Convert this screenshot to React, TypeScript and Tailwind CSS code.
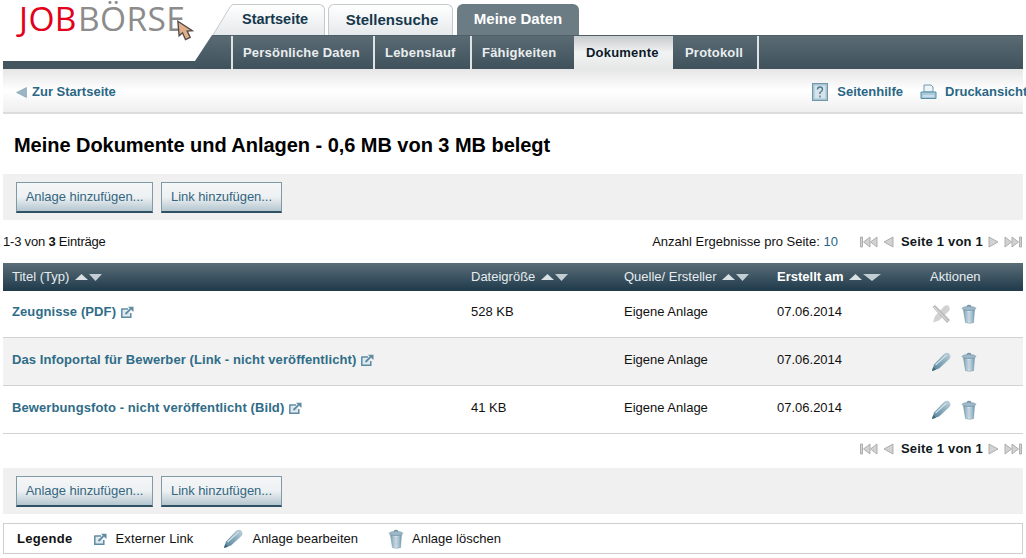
const Triangle = ({ down = false, big = false }: { down?: boolean; big?: boolean }) => (
  <svg width={big ? 18 : 13} height="8" viewBox="0 0 13 8" preserveAspectRatio="none" className="shrink-0">
    <path d={down ? "M0 1h13L6.500 8z" : "M0 7h13L6.500 1z"} fill={down ? "#c3ced4" : "#d9e1e5"} />
  </svg>
);

const SortArrows = ({ big = false }: { big?: boolean }) => (
  <span className="flex items-center gap-[1px] ml-[6px]">
    <Triangle />
    <Triangle down big={big} />
  </span>
);

const ExternalIcon = () => (
  <svg width="13" height="12" viewBox="0 0 13 12" className="shrink-0">
    <path d="M.8 3h6.200M.8 2.500v8.700h9V7" fill="#dfe9ee" stroke="#5c8ba3" strokeWidth="1.500" />
    <path d="M4.500 8l5-5" stroke="#5c8ba3" strokeWidth="1.800" />
    <path d="M7 .8h5.500v5.200z" fill="#5c8ba3" />
  </svg>
);

const TrashIcon = ({ size = 20 }: { size?: number }) => (
  <svg width={size * 0.8} height={size} viewBox="0 0 16 20" className="shrink-0">
    <defs>
      <linearGradient id="trash" x1="0" x2="1" y1="0" y2="0">
        <stop offset="0" stopColor="#6f9ab2" />
        <stop offset="0.5" stopColor="#dce8ee" />
        <stop offset="1" stopColor="#6f9ab2" />
      </linearGradient>
    </defs>
    <path d="M2.500 6h11l-1 12.500q-3.500 1.500-8 0z" fill="url(#trash)" stroke="#7d9aab" strokeWidth="0.6" />
    <path d="M6 8v9M8 8v9.500M10 8v9" stroke="#a7bfcc" strokeWidth="0.8" />
    <ellipse cx="8" cy="4.500" rx="6.800" ry="2" fill="#9db9c8" stroke="#6f8fa2" strokeWidth="0.6" />
    <path d="M6 2.500q2-2.200 4 0" fill="none" stroke="#6f8fa2" strokeWidth="1.200" />
  </svg>
);

const PencilIcon = ({ w = 20, h = 20 }: { w?: number; h?: number }) => (
  <svg width={w} height={h} viewBox="0 0 20 20" className="shrink-0">
    <defs>
      <linearGradient id="pen" x1="0" x2="1" y1="1" y2="0">
        <stop offset="0" stopColor="#4f7f98" />
        <stop offset="0.6" stopColor="#8fb0c2" />
        <stop offset="1" stopColor="#c2d3dc" />
      </linearGradient>
    </defs>
    <path d="M1 19l2-6.500L13 2q3.500-2.500 5.500 0t0 5L8 16.500z" fill="url(#pen)" />
    <path d="M1 19l1.200-4 2.800 2.800z" fill="#3f6478" />
    <path d="M4.500 13L15.500 3" stroke="#d6e2e8" strokeWidth="1.200" />
  </svg>
);

const PencilOff = () => (
  <svg width="20" height="20" viewBox="0 0 20 20" className="shrink-0">
    <path d="M2 18.500l2-6.500L13 2.500q3.500-2.500 5 0t0 4.500L8 16.500z" fill="#d2d2d2" />
    <path d="M1.500 3l2.500-2 15 15-3 3z" fill="#bcbcbc" />
    <path d="M3 3l13.500 14" stroke="#e6e6e6" strokeWidth="1" />
  </svg>
);

const PagerIcon = ({ kind }: { kind: "first" | "prev" | "next" | "last" }) => {
  const flip = kind === "next" || kind === "last";
  const isEnd = kind === "first" || kind === "last";
  return (
    <svg width={isEnd ? 18 : 11} height="12" viewBox={isEnd ? "0 0 18 12" : "0 0 11 12"} className={flip ? "shrink-0 -scale-x-100" : "shrink-0"}>
      {isEnd ? (
        <>
          <path d="M0.500 1h2v10h-2z" fill="#d2d2d2" stroke="#a8a8a8" strokeWidth="0.9" />
          <path d="M10 1v10L3.500 6z" fill="#d2d2d2" stroke="#a8a8a8" strokeWidth="0.9" />
          <path d="M17 1v10L10.500 6z" fill="#d2d2d2" stroke="#a8a8a8" strokeWidth="0.9" />
        </>
      ) : (
        <path d="M10 1v10L1 6z" fill="#d2d2d2" stroke="#a8a8a8" strokeWidth="0.9" />
      )}
    </svg>
  );
};

const Pager = () => (
  <div className="flex items-center">
    <PagerIcon kind="first" />
    <span className="ml-[5px]"><PagerIcon kind="prev" /></span>
    <span className="ml-[7px] mr-[5px] font-bold text-[13px] tracking-[0.2px] text-[#101820]">Seite 1 von 1</span>
    <PagerIcon kind="next" />
    <span className="ml-[5px]"><PagerIcon kind="last" /></span>
  </div>
);

const Buttons = () => (
  <div className="flex gap-2">
    {["Anlage hinzufügen...", "Link hinzufügen..."].map((t) => (
      <button
        key={t}
        className={`h-[31px] ${t.startsWith("Anlage") ? "w-[137px]" : "w-[121px]"} text-[13px] text-[#34667f] tracking-[-0.05px] border border-[#7f9aa6] border-b-2 border-b-[#2f5163] bg-gradient-to-b from-[#f4f6f7] via-[#eef1f3] to-[#b4c6cf]`}
      >
        {t}
      </button>
    ))}
  </div>
);

const SubNav = [
  { label: "Persönliche Daten", w: "w-[142px]", sep: true },
  { label: "Lebenslauf", w: "w-[97px]", sep: true },
  { label: "Fähigkeiten", w: "w-[104px]", sep: true },
  { label: "Dokumente", w: "w-[99px]", active: true },
  { label: "Protokoll", w: "w-[84px]" },
];

const rows = [
  { title: "Zeugnisse (PDF)", size: "528 KB", edit: false, h: "h-[47px] pb-[5px]", bg: "bg-white" },
  { title: "Das Infoportal für Bewerber (Link - nicht veröffentlicht)", size: "", edit: true, h: "h-[48px] pb-[4px]", bg: "bg-[#f2f2f2]" },
  { title: "Bewerbungsfoto - nicht veröffentlicht (Bild)", size: "41 KB", edit: true, h: "h-[48px] pb-[4px]", bg: "bg-white" },
];

const cols = "grid grid-cols-[459px_153px_153px_153px_1fr] items-center pl-[9px]";

const App = () => {
  return (
    <div className="w-[1026px] h-[558px] overflow-hidden bg-white font-['Liberation_Sans',Arial,sans-serif] text-[13px] text-[#111]">
      {/* header */}
      <header className="relative flex h-[69px] pl-[3px] pr-[3px]">
        <div className="relative w-[210px] shrink-0 flex flex-col justify-between">
          <div className="relative w-fit pl-[16px] pt-[1px] text-[33.500px] leading-[34px] font-['Open_Sans',sans-serif] tracking-[0.4px] whitespace-nowrap">
            <span className="text-[#e2001a] font-medium">JOB</span>
            <span className="text-[#8c8c8c] ml-[1px]">BÖRSE</span>
            <svg width="17" height="23" viewBox="0 0 20 26" className="absolute left-[174px] top-[20px]">
              <path d="M1 1l1.500 17 4-3.500 3.500 8 5.500-2.500-3.500-7.500 6-.5z" fill="#dfb08c" stroke="#544a44" strokeWidth="1.600" />
            </svg>
          </div>
          <div className="h-[8px] mr-[16px] bg-[#43555f]" />
          <svg width="18" height="34" viewBox="0 0 18 34" className="absolute right-0 bottom-0" preserveAspectRatio="none">
            <defs>
              <linearGradient id="slant" x1="0" x2="0" y1="0" y2="1">
                <stop offset="0" stopColor="#5a6b74" />
                <stop offset="1" stopColor="#3f515b" />
              </linearGradient>
            </defs>
            <path d="M0 26L17 0h1v34H0z" fill="url(#slant)" />
          </svg>
        </div>
        <div className="flex-1 flex flex-col min-w-0">
          <nav className="flex h-[35px] items-end">
            <div className="relative ml-[20px] w-[92px] h-[31px] rounded-tr-[6px] border-t border-r border-[#c5cacd] bg-gradient-to-b from-white to-[#e6e9eb] flex items-center pl-[9px] font-bold text-[14.500px] text-[#16384d]">
              <svg width="21" height="31" viewBox="0 0 21 31" className="absolute left-[-20px] top-[-1px]" preserveAspectRatio="none">
                <defs>
                  <linearGradient id="tabslant" x1="0" x2="0" y1="0" y2="1">
                    <stop offset="0" stopColor="#ffffff" />
                    <stop offset="1" stopColor="#e6e9eb" />
                  </linearGradient>
                </defs>
                <path d="M0 31L17 3q2-3 4-3v31z" fill="url(#tabslant)" />
                <path d="M0 31L17 3q2-3 4-2.500" fill="none" stroke="#c5cacd" />
              </svg>
              Startseite
            </div>
            <div className="ml-[3px] w-[125px] h-[31px] pl-[3px] rounded-t-[6px] border border-b-0 border-[#c5cacd] bg-gradient-to-b from-white to-[#e6e9eb] flex items-center justify-center font-bold text-[15px] text-[#16384d]">
              Stellensuche
            </div>
            <div className="ml-[4px] w-[122px] h-[31px] rounded-t-[6px] bg-[#6b7c85] flex items-center justify-center font-bold text-[15px] text-white">
              Meine Daten
            </div>
          </nav>
          <nav className="flex h-[34px] bg-gradient-to-b from-[#5a6b74] to-[#3f515b] pl-[18px] border-t border-[#4e5f68]">
            {SubNav.map((s) => (
              <div
                key={s.label}
                className={
                  s.active
                    ? `${s.w} flex items-center pl-[12px] font-bold tracking-[0.2px] text-[#0c1a2a] bg-gradient-to-b from-[#c7ccce] via-[#f2f3f3] to-[#e6e8e8]`
                    : s.sep
                      ? `${s.w} flex items-center pl-[10px] font-bold tracking-[0.2px] text-[#e9edef] border-l-2 border-[#dfe3e5]`
                      : `${s.w} flex items-center pl-[12px] font-bold tracking-[0.2px] text-[#e9edef]`
                }
              >
                {s.label}
              </div>
            ))}
            <div className="border-l-2 border-[#dfe3e5]" />
          </nav>
        </div>
      </header>

      {/* toolbar */}
      <div className="mx-[3px] h-[45px] pt-[3px] flex items-center justify-between border-b-2 border-[#dcdcdc] bg-gradient-to-b from-[#e6e6e6] via-white to-[#efefef] pl-[13px] text-[#2a6685] font-bold relative">
        <div className="flex items-center gap-[5px]">
          <svg width="11" height="11" viewBox="0 0 11 11">
            <path d="M10.500 .5v10L0.500 5.500z" fill="#9ab6c5" stroke="#7f9fb0" strokeWidth="0.6" />
          </svg>
          <span>Zur Startseite</span>
        </div>
        <div className="flex items-center whitespace-nowrap mr-[-3px]">
          <svg width="16" height="18" viewBox="0 0 16 18">
            <rect x="0.500" y="0.500" width="15" height="17" fill="#a9c3d0" stroke="#6f96aa" />
            <rect x="2.500" y="2.500" width="11" height="13" fill="#d6e3ea" />
            <path d="M5.500 6.500q0-2.500 2.500-2.500t2.500 2.500q0 1.500-2.500 3v1.500" fill="none" stroke="#4f7d93" strokeWidth="1.400" />
            <path d="M8 12.500v2" stroke="#4f7d93" strokeWidth="1.400" />
          </svg>
          <span className="ml-[9px]">Seitenhilfe</span>
          <svg width="17" height="16" viewBox="0 0 17 16" className="ml-[17px]">
            <path d="M4 1h7l2 2v5H4z" fill="#eef4f7" stroke="#6f9ab0" />
            <path d="M1 8h15v6.500H1z" fill="#a9cadb" stroke="#5b8ca6" />
            <path d="M3 12h11" stroke="#e8f2f6" />
          </svg>
          <span className="ml-[8px] w-[81px] overflow-hidden">Druckansicht</span>
        </div>
      </div>

      <h1 className="pl-[14px] pt-[19px] h-[60px] font-bold text-[20px] leading-[24px] tracking-[-0.04px] text-black">
        Meine Dokumente und Anlagen - 0,6 MB von 3 MB belegt
      </h1>

      <div className="mx-[3px] h-[46px] bg-[#f0f0f0] pl-[13px] pt-[8px]">
        <Buttons />
      </div>

      <div className="h-[43px] pt-[1px] pl-[3px] pr-[4px] flex items-center justify-between">
        <span className="tracking-[-0.2px]">
          1-3 von <b>3</b> Einträge
        </span>
        <div className="flex items-center">
          <span className="mr-[22px]">
            Anzahl Ergebnisse pro Seite: <span className="text-[#2a6685]">10</span>
          </span>
          <Pager />
        </div>
      </div>

      {/* table */}
      <div className="mx-[3px]">
        <div className={`${cols} h-[28px] bg-gradient-to-b from-[#5b6e78] to-[#1f3a4b] text-[#e6ecef]`}>
          <div className="flex items-center">Titel (Typ)<SortArrows /></div>
          <div className="flex items-center">Dateigröße<SortArrows /></div>
          <div className="flex items-center">Quelle/ Ersteller<SortArrows /></div>
          <div className="flex items-center font-bold text-white">Erstellt am<SortArrows big /></div>
          <div>Aktionen</div>
        </div>
        {rows.map((r) => (
          <div key={r.title} className={`${cols} ${r.h} ${r.bg} border-b border-[#d2d2d2]`}>
            <div className="flex items-center gap-[5px] font-bold text-[#2f6c87] tracking-[0.1px]">
              {r.title}
              <ExternalIcon />
            </div>
            <div>{r.size}</div>
            <div>Eigene Anlage</div>
            <div>07.06.2014</div>
            <div className="flex items-center gap-[10px] pl-[1px] pt-[5px]">
              {r.edit ? <PencilIcon /> : <PencilOff />}
              <TrashIcon />
            </div>
          </div>
        ))}
      </div>

      <div className="h-[34px] pb-[4px] pr-[4px] flex items-center justify-end">
        <Pager />
      </div>

      <div className="mx-[3px] h-[46px] bg-[#f0f0f0] pl-[13px] pt-[8px]">
        <Buttons />
      </div>

      <div className="mx-[3px] mt-[9px] h-[31px] border border-[#cfcfcf] flex items-center pl-[13px]">
        <b className="tracking-[0.3px]">Legende</b>
        <span className="ml-[21px]"><ExternalIcon /></span>
        <span className="ml-[9px] tracking-[0.1px]">Externer Link</span>
        <span className="ml-[30px]"><PencilIcon w={20} h={20} /></span>
        <span className="ml-[9px]">Anlage bearbeiten</span>
        <span className="ml-[30px]"><TrashIcon /></span>
        <span className="ml-[8px]">Anlage löschen</span>
      </div>
    </div>
  );
};

export default App;
